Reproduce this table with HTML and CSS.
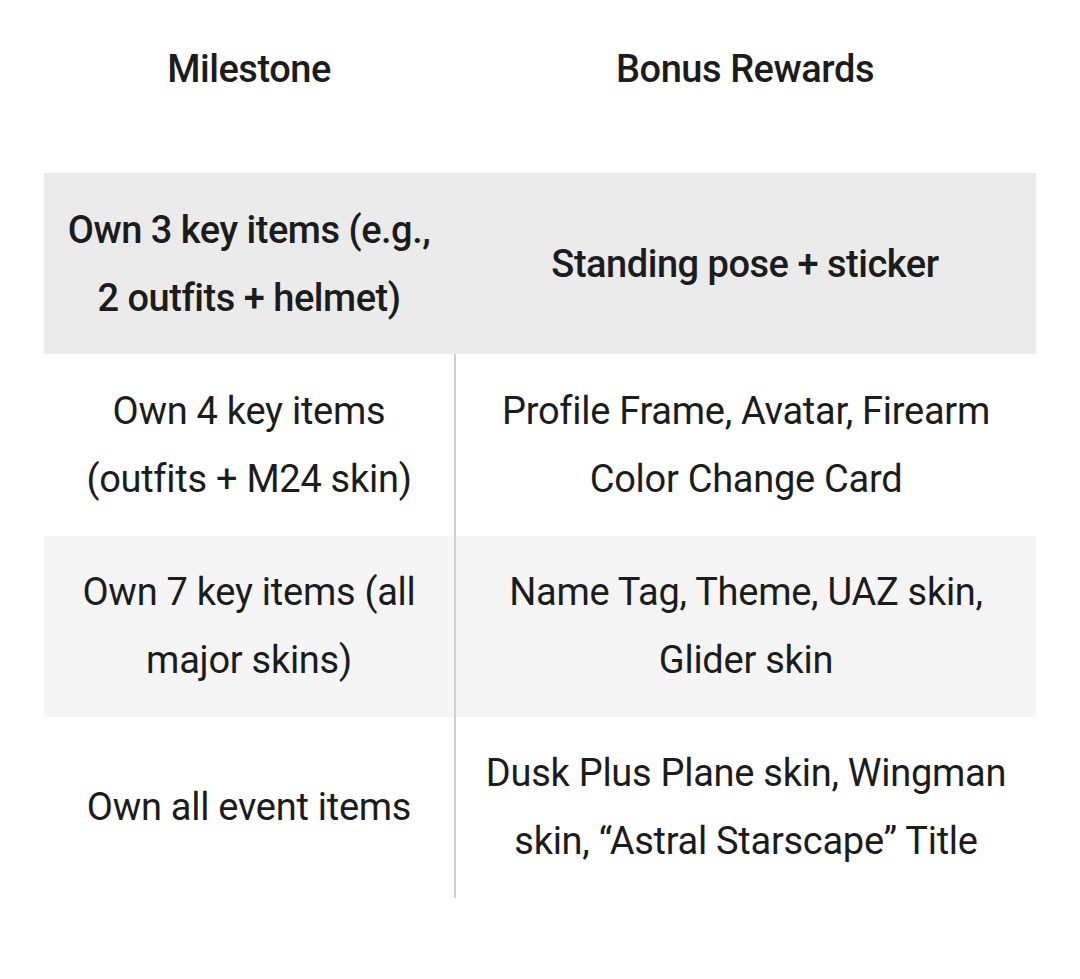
FILE: index.html
```html
<!DOCTYPE html>
<html>
<head>
<meta charset="utf-8">
<link rel="stylesheet" href="styles.css">
</head>
<body>
<div class="page">
  <div class="head">
    <div class="hcell">Milestone</div>
    <div class="hcell">Bonus Rewards</div>
  </div>
  <div class="table">
    <div class="row row-first">
      <div class="cell c1">Own 3 key items (e.g.,<br>2 outfits + helmet)</div>
      <div class="cell c2">Standing pose + sticker</div>
    </div>
    <div class="row">
      <div class="cell c1">Own 4 key items<br>(outfits + M24 skin)</div>
      <div class="cell c2 divided">Profile Frame, Avatar, Firearm<br>Color Change Card</div>
    </div>
    <div class="row row-alt">
      <div class="cell c1">Own 7 key items (all<br>major skins)</div>
      <div class="cell c2 divided">Name Tag, Theme, UAZ skin,<br>Glider skin</div>
    </div>
    <div class="row">
      <div class="cell c1">Own all event items</div>
      <div class="cell c2 divided">Dusk Plus Plane skin, Wingman<br>skin, “Astral Starscape” Title</div>
    </div>
  </div>
</div>
</body>
</html>
```
FILE: styles.css
```css
* { box-sizing: border-box; }
html, body { margin: 0; padding: 0; background: #fff; }
body {
  font-family: Roboto, "Noto Sans", sans-serif;
  color: #1c1c1c;
  width: 1080px;
  height: 979px;
  overflow: hidden;
}
.page { padding: 0 44px; }
.head {
  display: grid;
  grid-template-columns: 410px 582px;
  height: 138px;
  margin-bottom: 35px;
}
.hcell {
  display: flex;
  align-items: center;
  justify-content: center;
  font-size: 38px;
  font-weight: 500;
  letter-spacing: -0.45px;
}
.table { display: flex; flex-direction: column; }
.row {
  display: grid;
  grid-template-columns: 410px 582px;
  height: 181.25px;
}
.row-first { background: #ebebeb; }
.row-first .cell { font-weight: 500; letter-spacing: -0.48px; }
.row-alt { background: #f5f5f5; }
.cell {
  display: flex;
  align-items: center;
  justify-content: center;
  text-align: center;
  font-size: 38px;
  line-height: 68px;
  letter-spacing: -0.27px;
}
.divided { border-left: 2px solid #d0d0d0; }
```
